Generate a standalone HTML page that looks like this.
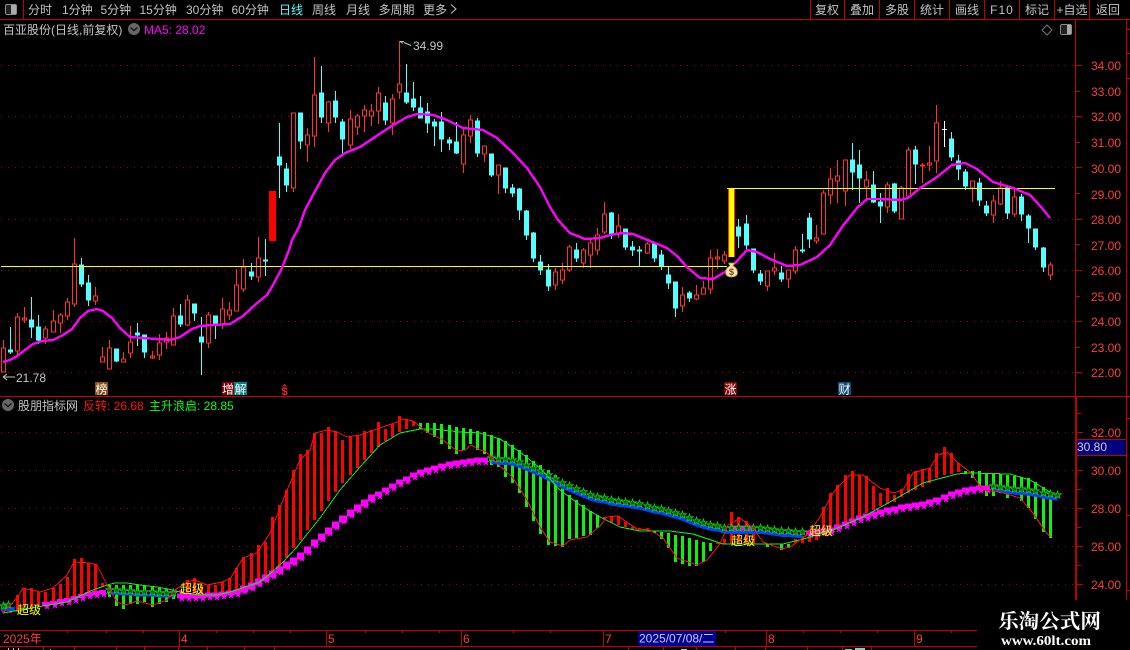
<!DOCTYPE html>
<html lang="zh"><head><meta charset="utf-8"><title>百亚股份</title>
<style>
html,body{margin:0;padding:0;background:#000;width:1130px;height:650px;overflow:hidden}
svg{display:block}
text{font-family:"Liberation Sans","WenQuanYi Zen Hei","Noto Sans CJK SC",sans-serif;font-size:12px}
.t{fill:#c4c4c4}
.ax{fill:#ff3c3c}
.m{font-size:12px;fill:#fff}
</style></head><body>
<svg width="1130" height="650" viewBox="0 0 1130 650" xmlns="http://www.w3.org/2000/svg">
<defs>
<marker id="sm" markerUnits="userSpaceOnUse" markerWidth="10" markerHeight="10" viewBox="-5 -5 10 10" refX="-1.5" refY="-2.500" overflow="visible"><polygon fill="#f0f" points="0,-4 1,-1.2 3.8,-1.2 1.5,.5 2.4,3.2 0,1.6 -2.4,3.2 -1.5,.5 -3.8,-1.2 -1,-1.2"/></marker>
<marker id="sg" markerUnits="userSpaceOnUse" markerWidth="10" markerHeight="10" viewBox="-5 -5 10 10" refX="0" refY="2" overflow="visible"><polygon fill="#005800" stroke="#10d010" stroke-width=".8" points="0,-4 1,-1.2 3.8,-1.2 1.5,.5 2.4,3.2 0,1.6 -2.4,3.2 -1.5,.5 -3.8,-1.2 -1,-1.2"/></marker>
</defs>
<rect width="1130" height="650" fill="#000"/>

<!-- frame lines -->
<g stroke="#c00000" stroke-width="1" shape-rendering="crispEdges" fill="none">
<path d="M0 19.5H1130M23.5 0V19M810.5 0V19M844.5 0V19M879.5 0V19M914.5 0V19M949.5 0V19M984.5 0V19M1019.5 0V19M1054.5 0V19M1089.5 0V19"/>
<path d="M1075.5 19V397M1126.5 19V600M0 396.5H1130"/>
<path d="M1076 65.5h6M1076 91.5h4M1076 116.5h6M1076 142.5h4M1076 167.5h6M1076 193.5h4M1076 219.5h6M1076 244.5h4M1076 270.5h6M1076 296.5h4M1076 321.5h6M1076 347.5h4M1076 372.5h6"/>
<path d="M1127 29.5h3M1127 53.5h3M1127 78.5h3M1127 418.5h3M1127 515.5h3M1127 590.5h3"/>
<path d="M1077 413.5h4M1077 432.5h6M1077 451.5h4M1077 470.5h6M1077 489.5h4M1077 508.5h6M1077 527.5h4M1077 546.5h6M1077 565.5h4M1077 584.5h6"/>
<path d="M0 630.5H977M0 646.5H977M179.5 630V646M326.5 630V646M461.5 630V646M603.5 630V646M766.5 630V646M914.5 630V646"/>
<path d="M67.5 631v2M106.5 631v2M143.5 631v2M216.5 631v2M253.5 631v2M290.5 631v2M365.5 631v2M402.5 631v2M439.5 631v2M513.5 631v2M550.5 631v2M725.5 631v2M803.5 631v2M840.5 631v2M877.5 631v2M951.5 631v2"/>
<path d="M43.5 647v3M74.5 647v3M116.5 647v3M144.5 647v3M178.5 647v3M207.5 647v3M244.5 647v3M274.5 647v3M628.5 647v3M663.5 647v3M696.5 647v3M735.5 647v3M765.5 647v3M807.5 647v3M842.5 647v3M871.5 647v3"/>
</g>
<path d="M1076 397V600" stroke="#c00000" stroke-width="2" shape-rendering="crispEdges"/>

<!-- dotted grid -->
<g stroke="#a80000" stroke-width="1" stroke-dasharray="1 6" shape-rendering="crispEdges">
<path d="M1 65.5H1075M1 116.5H1075M1 167.5H1075M1 219.5H1075M1 270.5H1075M1 321.5H1075M1 372.5H1075M1 432.5H1075M1 470.5H1075M1 508.5H1075M1 546.5H1075M1 584.5H1075"/>
</g>

<!-- top bar -->
<rect x="5.5" y="4.5" width="11" height="10" rx="1.5" fill="#222" stroke="#8a8a8a" shape-rendering="crispEdges"/><rect x="11" y="5" width="5" height="9" fill="#aaa"/>
<g class="t">
<text x="28" y="14" class="t">分时</text>
<text x="62" y="14" class="t">1分钟</text>
<text x="100.5" y="14" class="t">5分钟</text>
<text x="139.5" y="14" class="t">15分钟</text>
<text x="186" y="14" class="t">30分钟</text>
<text x="231.5" y="14" class="t">60分钟</text>
<text x="279" y="14" fill="#55ffff">日线</text>
<text x="312" y="14" class="t">周线</text>
<text x="346" y="14" class="t">月线</text>
<text x="378.5" y="14" class="t">多周期</text>
<text x="423" y="14" class="t">更多</text>
</g>
<path d="M451 4.5l5 4.500-5 4.500" fill="none" stroke="#c4c4c4"/>
<g text-anchor="middle">
<text x="827" y="14" class="t">复权</text>
<text x="862" y="14" class="t">叠加</text>
<text x="897" y="14" class="t">多股</text>
<text x="932" y="14" class="t">统计</text>
<text x="967" y="14" class="t">画线</text>
<text x="1002" y="14" class="t" letter-spacing="1">F10</text>
<text x="1037" y="14" class="t">标记</text>
<text x="1072" y="14" class="t">+自选</text>
<text x="1108" y="14" class="t">返回</text>
</g>

<!-- header top panel -->
<text x="3" y="34" class="t">百亚股份(日线,前复权)</text>
<circle cx="134" cy="29" r="6" fill="#666"/><path d="M130.500 27.500l3.500 3 3.500-3" fill="none" stroke="#111" stroke-width="1.300"/>
<text x="144" y="34" fill="#ff00ff">MA5: 28.02</text>
<path d="M1047 25l5 5-5 5-5-5z" fill="none" stroke="#777"/>
<rect x="1060.500" y="24.500" width="11" height="10" rx="1.500" fill="#222" stroke="#8a8a8a" shape-rendering="crispEdges"/><rect x="1067" y="25" width="4" height="9" fill="#aaa"/>

<!-- axis labels top -->
<g class="ax">
<text x="1091" y="70" class="ax">34.00</text><text x="1091" y="96" class="ax">33.00</text><text x="1091" y="121" class="ax">32.00</text><text x="1091" y="147" class="ax">31.00</text><text x="1091" y="173" class="ax">30.00</text><text x="1091" y="199" class="ax">29.00</text><text x="1091" y="224" class="ax">28.00</text><text x="1091" y="250" class="ax">27.00</text><text x="1091" y="275" class="ax">26.00</text><text x="1091" y="301" class="ax">25.00</text><text x="1091" y="326" class="ax">24.00</text><text x="1091" y="352" class="ax">23.00</text><text x="1091" y="377" class="ax">22.00</text>
<text x="1091" y="437" class="ax">32.00</text><text x="1091" y="475" class="ax">30.00</text><text x="1091" y="513" class="ax">28.00</text><text x="1091" y="551" class="ax">26.00</text><text x="1091" y="589" class="ax">24.00</text>
</g>
<rect x="1077" y="439" width="48" height="16" fill="#000080"/><path d="M1077 439.500h49M1077 455.500h49" stroke="#c00000" shape-rendering="crispEdges"/>
<text x="1077" y="451" fill="#d0d0d0">30.80</text>

<!-- candles -->
<g shape-rendering="crispEdges">
<path stroke="#54ffff" fill="#54ffff" d="M10.5 327V354M8.5 350h4V352h-4zM31.5 297V338M29.500 320h4V327h-4zM38.500 315V344M36.500 327h4V340h-4zM81.500 258V287M79.500 265h4V284h-4zM88.500 275V306M86.500 283h4V300h-4zM116.500 349V362M114.500 349h4V361h-4zM137.500 323V346M135.500 333h4V335h-4zM144.500 335V358M142.500 335h4V352h-4zM180.500 304V327M178.500 316h4V324h-4zM194.500 304V321M192.500 304h4V313h-4zM201.500 317V375M199.500 337h4V342h-4zM215.500 316V339M213.500 316h4V324h-4zM251.500 263V280M249.500 272h4V276h-4zM265.500 239V276M263.500 260h4V261h-4zM279.500 123V198M277.500 157h4V165h-4zM286.500 163V192M284.500 169h4V185h-4zM300.500 113V149M298.500 113h4V141h-4zM321.500 66V123M319.500 93h4V117h-4zM335.500 91V123M333.500 101h4V117h-4zM342.500 119V155M340.500 122h4V139h-4zM385.500 96V125M383.500 103h4V120h-4zM406.500 64V104M404.500 93h4V102h-4zM413.500 82V111M411.500 99h4V107h-4zM420.500 96V118M418.500 108h4V118h-4zM427.500 103V133M425.500 112h4V123h-4zM434.500 119V146M432.500 122h4V126h-4zM441.500 112V152M439.500 122h4V139h-4zM449.500 137V150M447.500 140h4V143h-4zM456.500 122V154M454.500 142h4V153h-4zM477.500 118V157M475.500 121h4V153h-4zM491.500 154V177M489.500 154h4V175h-4zM505.500 168V193M503.500 168h4V188h-4zM512.500 184V197M510.500 188h4V193h-4zM519.500 188V220M517.500 189h4V210h-4zM526.500 210V240M524.500 211h4V235h-4zM533.500 232V262M531.500 233h4V258h-4zM540.500 255V275M538.500 262h4V270h-4zM548.500 264V291M546.500 270h4V286h-4zM576.500 243V262M574.500 250h4V258h-4zM611.500 212V239M609.500 213h4V234h-4zM625.500 229V250M623.500 229h4V247h-4zM632.500 241V256M630.500 247h4V250h-4zM639.500 246V266M637.500 250h4V251h-4zM654.500 242V262M652.500 244h4V258h-4zM661.500 250V270M659.500 255h4V266h-4zM668.500 267V289M666.500 275h4V283h-4zM675.500 282V317M673.500 282h4V308h-4zM689.500 291V302M687.500 293h4V298h-4zM738.500 219V248M736.500 227h4V236h-4zM746.500 215V249M744.500 224h4V245h-4zM753.500 249V273M751.500 249h4V270h-4zM760.500 270V285M758.500 274h4V281h-4zM781.500 266V282M779.500 273h4V279h-4zM802.500 234V253M800.500 250h4V251h-4zM809.500 213V248M807.500 218h4V239h-4zM852.500 143V190M850.500 160h4V172h-4zM859.500 150V203M857.500 165h4V178h-4zM873.500 171V203M871.500 185h4V202h-4zM880.500 193V223M878.500 202h4V206h-4zM894.500 183V213M892.500 184h4V211h-4zM915.500 146V184M913.500 150h4V164h-4zM951.500 132V161M949.500 139h4V157h-4zM958.500 155V180M956.500 161h4V169h-4zM965.500 169V190M963.500 172h4V186h-4zM979.500 178V206M977.500 183h4V200h-4zM986.500 201V216M984.500 206h4V213h-4zM1007.500 187V219M1005.500 188h4V213h-4zM1021.500 194V221M1019.500 197h4V214h-4zM1028.500 214V243M1026.500 216h4V228h-4zM1035.500 229V250M1033.500 229h4V247h-4zM1043.500 247V272M1041.500 248h4V267h-4z"/>
<path stroke="#ff3232" fill="#000" d="M3.500 340V348M1.500 348h4V372h-4zM17.500 313V317M17.500 351V355M15.500 317h4V351h-4zM24.500 307V323M22.500 318h4V320h-4zM45.500 326V329M45.500 338V344M43.500 329h4V338h-4zM53.500 310V321M51.500 321h4V332h-4zM60.500 313V315M60.500 323V333M58.500 315h4V323h-4zM67.500 298V302M67.500 316V320M65.500 302h4V316h-4zM74.500 238V264M74.500 304V307M72.500 264h4V304h-4zM95.500 287V296M95.500 301V305M93.500 296h4V301h-4zM102.500 347V357M100.500 357h4V362h-4zM109.500 340V348M107.500 348h4V369h-4zM123.500 352V359M121.500 359h4V362h-4zM130.500 326V342M130.500 353V358M128.500 342h4V353h-4zM152.500 351V359M150.500 356h4V358h-4zM159.500 334V343M159.500 355V360M157.500 343h4V355h-4zM166.500 332V338M166.500 342V349M164.500 338h4V342h-4zM173.500 308V316M171.500 316h4V345h-4zM187.500 295V300M187.500 325V326M185.500 300h4V325h-4zM208.500 312V315M208.500 343V348M206.500 315h4V343h-4zM222.500 298V309M222.500 324V329M220.500 309h4V324h-4zM229.500 302V310M229.500 315V320M227.500 310h4V315h-4zM236.500 269V285M234.500 285h4V311h-4zM243.500 259V267M243.500 289V292M241.500 267h4V289h-4zM258.500 237V258M258.500 277V282M256.500 258h4V277h-4zM293.500 188V192M291.500 113h4V188h-4zM307.500 128V135M307.500 145V162M305.500 135h4V145h-4zM314.500 57V95M314.500 136V147M312.500 95h4V136h-4zM328.500 101V102M328.500 123V132M326.500 102h4V123h-4zM350.500 110V119M350.500 145V149M348.500 119h4V145h-4zM357.500 114V116M357.500 127V135M355.500 116h4V127h-4zM364.500 105V110M364.500 116V132M362.500 110h4V116h-4zM371.500 104V111M371.500 116V126M369.500 111h4V116h-4zM378.500 87V93M378.500 111V124M376.500 93h4V111h-4zM392.500 94V99M392.500 123V135M390.500 99h4V123h-4zM399.500 41V84M399.500 92V99M397.500 84h4V92h-4zM463.500 128V135M463.500 164V173M461.500 135h4V164h-4zM470.500 115V120M470.500 136V143M468.500 120h4V136h-4zM484.500 154V162M482.500 146h4V154h-4zM498.500 175V194M496.500 165h4V175h-4zM555.500 268V272M555.500 285V290M553.500 272h4V285h-4zM562.500 263V270M562.500 280V284M560.500 270h4V280h-4zM569.500 245V247M569.500 270V272M567.500 247h4V270h-4zM583.500 248V250M583.500 263V268M581.500 250h4V263h-4zM590.500 240V243M590.500 255V268M588.500 243h4V255h-4zM597.500 228V235M597.500 250V255M595.500 235h4V250h-4zM604.500 202V214M604.500 232V234M602.500 214h4V232h-4zM618.500 214V226M618.500 234V238M616.500 226h4V234h-4zM647.500 242V244M647.500 253V254M645.500 244h4V253h-4zM682.500 287V295M682.500 306V312M680.500 295h4V306h-4zM696.500 285V295M696.500 299V300M694.500 295h4V299h-4zM703.500 281V288M701.500 288h4V294h-4zM710.500 250V258M710.500 289V294M708.500 258h4V289h-4zM717.500 249V269M715.500 257h4V259h-4zM724.500 251V255M724.500 261V264M722.500 255h4V261h-4zM767.500 286V291M765.500 271h4V286h-4zM774.500 253V268M774.500 271V275M772.500 268h4V271h-4zM788.500 279V288M786.500 270h4V279h-4zM795.500 246V250M795.500 271V274M793.500 250h4V271h-4zM816.500 225V238M816.500 241V244M814.500 238h4V241h-4zM823.500 190V193M821.500 193h4V234h-4zM830.500 168V179M830.500 195V204M828.500 179h4V195h-4zM837.500 160V176M837.500 181V203M835.500 176h4V181h-4zM845.500 191V206M843.500 160h4V191h-4zM866.500 171V180M866.500 187V198M864.500 180h4V187h-4zM887.500 182V185M887.500 207V213M885.500 185h4V207h-4zM901.500 186V188M899.500 188h4V219h-4zM908.500 147V150M906.500 150h4V196h-4zM922.500 163V183M920.500 165h4V166h-4zM929.500 146V171M927.500 163h4V165h-4zM936.500 105V123M936.500 161V173M934.500 123h4V161h-4zM972.500 188V202M970.500 181h4V188h-4zM993.500 195V201M993.500 215V223M991.500 201h4V215h-4zM1000.500 181V188M1000.500 204V205M998.500 188h4V204h-4zM1014.500 187V197M1014.500 214V217M1012.500 197h4V214h-4zM1050.500 262V265M1050.500 275V280M1048.500 265h4V275h-4z"/>
<path stroke="#fff" fill="none" d="M944.500 121V147M942 129.500h5"/>
<rect x="269" y="191" width="7" height="50" fill="#ff0000"/>
<rect x="728" y="188" width="7" height="69" fill="#ff3000"/><rect x="729" y="188" width="5" height="69" fill="#ffff00"/>
<path d="M1 266.500H727M727 188.500H1055" stroke="#ffff00" stroke-width="1"/>
<polyline fill="none" stroke="#ff00ff" stroke-width="2.400" stroke-linejoin="round" points="3,362 10,360 17,356 25,350 33,344 42,341 53,340 63,335 72,329 80,318 88,311 97,309 103,311 112,318 120,328 130,337 143,338 157,339 170,340 180,337 192,329 200,326 213,325 230,324 243,316 257,303 267,295 273,285 282,268 289,250 292,240 299,227 305,210 313,195 325,173 335,160 345,153 360,147 375,137 390,127 407,117 417,114 433,115 447,120 463,128 483,130 497,138 513,153 527,168 540,187 550,207 558,220 570,233 585,239 600,238 610,235 622,233 633,234 650,241 667,248 677,256 687,267 700,278 713,279 725,272 737,261 747,250 757,252 770,259 787,266 800,265 817,257 830,245 842,227 857,208 867,199 880,199 900,200 908,198 920,188 937,177 952,165 965,163 977,169 993,182 1013,188 1030,195 1042,208 1050,218"/>
</g>

<!-- money bag -->
<path d="M728.500 263h6l-1.500 3c3 1 4.500 4 4.500 6.500 0 3-2.500 4.500-6 4.500s-6-1.500-6-4.500c0-2.500 1.500-5.500 4.500-6.500z" fill="#f6e7a6" stroke="#b08a30" stroke-width=".8"/>
<text x="731.500" y="275" text-anchor="middle" style="font-size:9px;font-weight:bold" fill="#8a3a20">$</text>

<!-- hi/lo -->
<path d="M400 41.500h4M400 41.500l3 2M404 42.500l7 3" fill="none" stroke="#c4c4c4"/>
<text x="413" y="50" class="t">34.99</text>
<path d="M3 377h12M3 377l4-3M3 377l4 3" fill="none" stroke="#c4c4c4"/>
<text x="16" y="382" class="t">21.78</text>

<!-- markers -->
<rect x="95" y="382" width="13" height="13" fill="#8b5010"/><text x="95.500" y="393.500" class="m">榜</text>
<rect x="222" y="382" width="12" height="13" fill="#800000"/><text x="222" y="393.500" class="m">增</text>
<rect x="234" y="382" width="13" height="13" fill="#008080"/><text x="234.500" y="393.500" class="m">解</text>
<text x="284.500" y="395" text-anchor="middle" style="font-size:11px;font-weight:bold" fill="#ff2020">$</text><path d="M282.500 387l2-2.500 2 2.500" fill="none" stroke="#ff2020"/>
<rect x="724" y="382" width="13" height="13" fill="#800000"/><text x="724.500" y="393.500" class="m">涨</text>
<rect x="838" y="382" width="13" height="13" fill="#104878"/><text x="838.500" y="393.500" class="m">财</text>

<!-- header bottom panel -->
<circle cx="8" cy="405" r="6" fill="#666"/><path d="M4.500 403.500l3.500 3 3.500-3" fill="none" stroke="#111" stroke-width="1.300"/>
<text x="18" y="410" class="t">股朋指标网</text>
<text x="83" y="410" fill="#ff1010">反转: 26.68</text>
<text x="149" y="410" fill="#10ff10">主升浪启: 28.85</text>

<!-- indicator bars -->
<g shape-rendering="crispEdges" stroke-width="3" fill="none">
<path stroke="#ff0000" d="M3.500 611V613M10.500 607V613M17.500 595V612M24.500 588V607M31.500 588V607M38.500 592V606M45.500 592V605M53.500 588V605M60.500 584V604M67.500 577V602M74.500 559V598M81.500 558V596M88.500 563V593M95.500 564V591M102.500 583V587M180.500 590V592M187.500 580V593M194.500 578V593M201.500 585V594M208.500 585V593M215.500 585V594M222.500 582V593M229.500 578V591M236.500 568V590M243.500 557V588M251.500 553V587M258.500 545V583M265.500 542V578M272.500 517V573M279.500 505V567M286.500 490V558M293.500 470V548M300.500 454V540M307.500 450V530M314.500 433V520M321.500 433V511M328.500 427V501M335.500 431V492M342.500 440V483M350.500 437V475M357.500 435V468M364.500 431V460M371.500 430V453M378.500 422V447M385.500 429V441M392.500 424V437M399.500 416V432M406.500 419V429M413.500 421V426M604.500 517V520M611.500 517V523M618.500 516V525M625.500 522V527M632.500 527V529M639.500 528V530M647.500 528V531M717.500 543V544M724.500 539V544M731.500 512V544M738.500 517V544M746.500 521V544M753.500 534V544M795.500 539V543M802.500 536V543M809.500 530V542M816.500 529V540M823.500 507V535M830.500 493V530M837.500 485V527M845.500 475V524M852.500 471V520M859.500 475V517M866.500 476V513M873.500 486V510M880.500 493V506M887.500 488V504M894.500 495V502M901.500 489V497M908.500 474V493M915.500 471V490M922.500 469V487M929.500 468V483M936.500 453V478M944.500 447V475M951.500 453V474M958.500 463V472"/>
<path stroke="#10f010" d="M109.500 585V597M116.500 585V606M123.500 585V609M130.500 585V604M137.500 585V604M144.500 585V602M152.500 587V607M159.500 588V604M166.500 589V602M173.500 590V599M420.500 423V429M427.500 423V433M434.500 423V437M441.500 424V444M449.500 425V449M456.500 427V454M463.500 428V450M470.500 429V444M477.500 431V450M484.500 432V454M491.500 435V465M498.500 438V467M505.500 441V477M512.500 445V483M519.500 450V493M526.500 455V507M533.500 461V521M540.500 465V534M548.500 470V545M555.500 475V546M562.500 482V547M569.500 495V539M576.500 500V538M583.500 505V536M590.500 511V535M597.500 515V528M654.500 531V533M661.500 532V539M668.500 533V548M675.500 535V562M682.500 536V564M689.500 538V566M696.500 540V566M703.500 542V562M710.500 543V551M767.500 544V547M781.500 544V550M788.500 544V548M965.500 471V474M972.500 471V478M979.500 471V487M986.500 473V496M993.500 473V496M1000.500 474V493M1007.500 475V498M1014.500 476V494M1021.500 477V501M1028.500 478V508M1035.500 482V519M1043.500 487V532M1050.500 494V538"/>
</g>

<!-- star lines -->
<g fill="none" shape-rendering="crispEdges">
<path stroke="#ff00ff" stroke-width="4" d="M42 604h8M50 603h7M57 601h7M64 600h7M71 598h7M78 596h7M85 594h7M92 593h7M99 592h7"/>
<path stroke="#ff00ff" stroke-width="5" d="M177 596h7M184 596h7M191 596h7M198 596h7M205 595h7M212 595h7M219 594h7M226 593h7M233 592h7M375 494h7M382 490h7M389 486h7M396 482h7M403 479h7M410 475h7M417 472h7M424 470h7M431 468h7M438 466h8M446 464h7M453 463h7M460 462h7M467 461h7M474 460h7M481 460h7M806 533h7M813 532h7M820 531h7M827 530h7M834 527h8M842 524h7M849 521h7M856 518h7M863 516h7M870 514h7M877 512h7M884 510h7M891 509h7M898 507h7M905 506h7M912 505h7M919 504h7M926 502h7M933 500h8M941 497h7M948 494h7M955 492h7M962 490h7M969 489h7M976 488h7M983 488h7"/>
<path stroke="#ff00ff" stroke-width="7" d="M240 589h8M248 586h7M255 582h7M262 578h7M269 574h7M276 570h7M283 565h7M290 561h7M297 556h7M304 550h7M311 543h7M318 537h7M325 531h7M332 525h7M339 519h8M347 513h7M354 508h7M361 503h7M368 498h7"/>
<path stroke="#ff00ff" stroke-width="5" d="M731 528h22"/>
<polyline stroke="none" marker-start="url(#sm)" marker-mid="url(#sm)" marker-end="url(#sm)" points="45.500,604 53.500,603 60.500,601 67.500,600 74.500,598 81.500,596 88.500,594 95.500,593 102.500,592"/>
<polyline stroke="none" marker-start="url(#sm)" marker-mid="url(#sm)" marker-end="url(#sm)" points="180.500,596 187.500,596 194.500,596 201.500,596 208.500,595 215.500,595 222.500,594 229.500,593 236.500,592 243.500,589 251.500,586 258.500,582 265.500,578 272.500,574 279.500,570 286.500,565 293.500,561 300.500,556 307.500,550 314.500,543 321.500,537 328.500,531 335.500,525 342.500,519 350.500,513 357.500,508 364.500,503 371.500,498 378.500,494 385.500,490 392.500,486 399.500,482 406.500,479 413.500,475 420.500,472 427.500,470 434.500,468 441.500,466 449.500,464 456.500,463 463.500,462 470.500,461 477.500,460 484.500,460"/>
<polyline stroke="none" marker-start="url(#sm)" marker-mid="url(#sm)" marker-end="url(#sm)" points="809.500,533 816.500,532 823.500,531 830.500,530 837.500,527 845.500,524 852.500,521 859.500,518 866.500,516 873.500,514 880.500,512 887.500,510 894.500,509 901.500,507 908.500,506 915.500,505 922.500,504 929.500,502 936.500,500 944.500,497 951.500,494 958.500,492 965.500,490 972.500,489 979.500,488 986.500,488"/>
<polyline stroke="#0040ff" stroke-width="4" points="1,609 15,609"/>
<polyline stroke="#0040ff" stroke-width="3" points="109.500,593 116.500,593 123.500,594 130.500,594 137.500,595 144.500,595 152.500,595 159.500,596 166.500,596 173.500,596"/>
<polyline stroke="#0040ff" stroke-width="3.500" points="491.500,462 498.500,463 505.500,463 512.500,464 519.500,466 526.500,469 533.500,472 540.500,475 548.500,479 555.500,483 562.500,487 569.500,490 576.500,493 583.500,496 590.500,499 597.500,501 604.500,502 611.500,504 618.500,505 625.500,506 632.500,507 639.500,508 647.500,510 654.500,512 661.500,513 668.500,515 675.500,517 682.500,519 689.500,522 696.500,525 703.500,527 710.500,529 717.500,530 724.500,532 731.500,532 738.500,532 746.500,532 753.500,532 760.500,532 767.500,533 774.500,534 781.500,535 788.500,535 795.500,536 802.500,536"/>
<polyline stroke="#0040ff" stroke-width="3.500" points="993.500,490 1000.500,491 1007.500,492 1014.500,493 1021.500,493 1028.500,494 1035.500,495 1043.500,497 1050.500,498 1057.500,499"/>
</g>
<g fill="none">
<polyline stroke="none" marker-start="url(#sg)" marker-mid="url(#sg)" marker-end="url(#sg)" points="3.500,608 8.500,607"/>
<polyline stroke="none" marker-start="url(#sg)" marker-mid="url(#sg)" marker-end="url(#sg)" points="109.500,592 116.500,592 123.500,593 130.500,593 137.500,594 144.500,594 152.500,594 159.500,595 166.500,595 173.500,595"/>
<polyline stroke="none" marker-start="url(#sg)" marker-mid="url(#sg)" marker-end="url(#sg)" points="491.500,460 498.500,461 505.500,461 512.500,462 519.500,464 526.500,467 533.500,470 540.500,473 548.500,477 555.500,481 562.500,485 569.500,488 576.500,491 583.500,494 590.500,497 597.500,499 604.500,500 611.500,502 618.500,503 625.500,504 632.500,505 639.500,506 647.500,508 654.500,510 661.500,511 668.500,513 675.500,515 682.500,517 689.500,520 696.500,523 703.500,525 710.500,527 717.500,528 724.500,530 731.500,530 738.500,530 746.500,530 753.500,530 760.500,530 767.500,531 774.500,532 781.500,533 788.500,533 795.500,534 802.500,534"/>
<polyline stroke="none" marker-start="url(#sg)" marker-mid="url(#sg)" marker-end="url(#sg)" points="993.500,488 1000.500,489 1007.500,490 1014.500,491 1021.500,491 1028.500,492 1035.500,493 1043.500,495 1050.500,496 1057.500,497"/>
</g>

<!-- thin curves -->
<g fill="none" stroke-width="1" shape-rendering="crispEdges">
<polyline stroke="#10f010" points="3,613 20,610 43,606 67,602 80,596 93,590 107,585 115,583 127,583 140,585 157,587 173,590 183,593 200,595 217,595 230,592 245,587 260,582 272,572 283,562 297,547 300,543 320,518 340,490 360,467 380,445 400,433 420,429 433,429 460,432 480,433 500,439 520,452 540,468 560,490 580,505 600,517 620,527 640,531 670,531 693,534 723,544 783,544 807,538 833,530 863,517 897,498 923,483 957,474 970,473 1010,474 1030,480 1050,492"/>
<polyline stroke="#ff1010" points="3,613 17,598 23,588 40,592 53,588 67,575 74,562 90,563 97,565 107,585 117,602 125,605 137,601 153,605 167,600 175,590 187,582 195,580 207,585 222,582 230,579 243,558 257,553 270,533 285,495 300,460 310,450 315,433 327,430 337,432 347,437 360,435 380,428 397,422 403,419 413,421 427,432 443,440 457,451 465,450 471,445 480,450 485,451 497,463 513,478 527,500 540,527 550,542 563,546 570,540 587,537 600,526 607,517 618,516 628,523 637,529 650,530 663,538 677,558 697,565 707,560 720,544 728,525 740,518 753,528 763,542 782,549 790,547 807,535 820,517 833,493 838,487 850,475 863,475 880,488 893,493 903,490 913,473 930,468 938,455 947,452 958,463 970,472 983,490 1000,492 1020,498 1033,513 1043,528 1050,537"/>
</g>

<!-- super labels -->
<g fill="#ffff00">
<text x="17" y="614">超级</text>
<text x="180" y="593">超级</text>
<text x="731" y="545">超级</text>
<text x="809" y="535">超级</text>
</g>

<!-- time axis -->
<g class="ax">
<text x="3" y="643" class="ax">2025年</text>
<text x="181" y="643" class="ax">4</text>
<text x="328" y="643" class="ax">5</text>
<text x="463" y="643" class="ax">6</text>
<text x="605" y="643" class="ax">7</text>
<text x="768" y="643" class="ax">8</text>
<text x="916" y="643" class="ax">9</text>
</g>
<rect x="638" y="631" width="78" height="15" fill="#000090"/>
<text x="639" y="642.500" fill="#c8c8ff">2025/07/08/二</text>
<path d="M8 648h1v2h-1zM13 648h1v2h-1zM18 648h1v2h-1zM50 649h1v1h-1zM681 649h6v1h-6z" fill="#c0c0c0"/>
<path d="M845 649h7v1h-7zM855 648h10v2h-10z" fill="#8cc8c8"/>

<!-- watermark -->
<rect x="978" y="601" width="152" height="49" fill="#000"/>
<text x="998" y="628" fill="#fff" textLength="103" lengthAdjust="spacingAndGlyphs" style="font-family:'Liberation Serif','Noto Serif CJK SC',serif;font-size:20px;font-weight:bold">乐淘公式网</text>
<text x="1001" y="645" fill="#fff" textLength="90" lengthAdjust="spacingAndGlyphs" style="font-family:'Liberation Serif',serif;font-size:14px;font-weight:bold">www.60lt.com</text>
</svg>
</body></html>
